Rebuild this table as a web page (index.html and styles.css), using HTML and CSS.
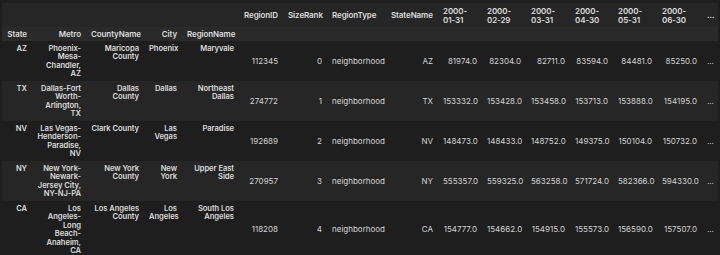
FILE: index.html
```html
<!DOCTYPE html>
<html lang="en">
<head>
    <meta charset="UTF-8">
    <meta name="viewport" content="width=device-width, initial-scale=1.0">
    <title>DataFrame preview</title>
    <link rel="stylesheet" href="styles.css">
</head>
<body>

<div class="output">
    <table class="dataframe">
        <colgroup>
            <col class="w-state">
            <col class="w-metro">
            <col class="w-county">
            <col class="w-city">
            <col class="w-region">
            <col class="w-id">
            <col class="w-rank">
            <col class="w-type">
            <col class="w-statename">
            <col class="w-date">
            <col class="w-date">
            <col class="w-date">
            <col class="w-date-narrow">
            <col class="w-date">
            <col class="w-date-wide">
            <col class="w-more">
        </colgroup>
        <thead>
            <tr class="col-names">
                <th></th>
                <th></th>
                <th></th>
                <th></th>
                <th></th>
                <th>RegionID</th>
                <th>SizeRank</th>
                <th>RegionType</th>
                <th>StateName</th>
                <th>2000-01-31</th>
                <th>2000-02-29</th>
                <th>2000-03-31</th>
                <th>2000-04-30</th>
                <th>2000-05-31</th>
                <th>2000-06-30</th>
                <th>...</th>
            </tr>
            <tr class="index-names">
                <th>State</th>
                <th>Metro</th>
                <th>CountyName</th>
                <th>City</th>
                <th>RegionName</th>
                <th></th>
                <th></th>
                <th></th>
                <th></th>
                <th></th>
                <th></th>
                <th></th>
                <th></th>
                <th></th>
                <th></th>
                <th></th>
            </tr>
        </thead>
        <tbody>
            <tr>
                <th>AZ</th>
                <th>Phoenix-Mesa-Chandler, AZ</th>
                <th>Maricopa County</th>
                <th>Phoenix</th>
                <th>Maryvale</th>
                <td>112345</td>
                <td>0</td>
                <td>neighborhood</td>
                <td>AZ</td>
                <td>81974.0</td>
                <td>82304.0</td>
                <td>82711.0</td>
                <td>83594.0</td>
                <td>84481.0</td>
                <td>85250.0</td>
                <td>...</td>
            </tr>
            <tr>
                <th>TX</th>
                <th>Dallas-Fort Worth-Arlington, TX</th>
                <th>Dallas County</th>
                <th>Dallas</th>
                <th>Northeast Dallas</th>
                <td>274772</td>
                <td>1</td>
                <td>neighborhood</td>
                <td>TX</td>
                <td>153332.0</td>
                <td>153428.0</td>
                <td>153458.0</td>
                <td>153713.0</td>
                <td>153888.0</td>
                <td>154195.0</td>
                <td>...</td>
            </tr>
            <tr>
                <th>NV</th>
                <th>Las Vegas-Henderson-Paradise, NV</th>
                <th>Clark County</th>
                <th>Las Vegas</th>
                <th>Paradise</th>
                <td>192689</td>
                <td>2</td>
                <td>neighborhood</td>
                <td>NV</td>
                <td>148473.0</td>
                <td>148433.0</td>
                <td>148752.0</td>
                <td>149375.0</td>
                <td>150104.0</td>
                <td>150732.0</td>
                <td>...</td>
            </tr>
            <tr>
                <th>NY</th>
                <th>New York-Newark-Jersey City, NY-NJ-PA</th>
                <th>New York County</th>
                <th>New York</th>
                <th>Upper East Side</th>
                <td>270957</td>
                <td>3</td>
                <td>neighborhood</td>
                <td>NY</td>
                <td>555357.0</td>
                <td>559325.0</td>
                <td>563258.0</td>
                <td>571724.0</td>
                <td>582366.0</td>
                <td>594330.0</td>
                <td>...</td>
            </tr>
            <tr>
                <th>CA</th>
                <th>Los Angeles-Long Beach-Anaheim, CA</th>
                <th>Los Angeles County</th>
                <th>Los Angeles</th>
                <th>South Los Angeles</th>
                <td>118208</td>
                <td>4</td>
                <td>neighborhood</td>
                <td>CA</td>
                <td>154777.0</td>
                <td>154662.0</td>
                <td>154915.0</td>
                <td>155573.0</td>
                <td>156590.0</td>
                <td>157507.0</td>
                <td>...</td>
            </tr>
        </tbody>
    </table>
</div>

</body>
</html>
```

FILE: styles.css
```css
body {
    margin: 0;
    background-color: #1e1e1e;
    color: #d4d4d4;
    font-family: Inter, "Liberation Sans", sans-serif;
    font-size: 8px;
    line-height: 8.5px;
}
.output {
    padding: 3px 0 0 2px;
    overflow: hidden;
    height: 252px;
}
.dataframe {
    border-collapse: collapse;
    border-spacing: 0;
    table-layout: fixed;
    width: 716px;
}
.dataframe th,
.dataframe td {
    padding: 3px 5px 2px;
    text-align: right;
}
.dataframe th {
    font-weight: 600;
    color: #dcdcdc;
    letter-spacing: -0.1px;
}
.dataframe td {
    vertical-align: middle;
}
.dataframe tbody th {
    vertical-align: top;
    padding-top: 4px;
    font-size: 7.6px;
    letter-spacing: -0.05px;
}
.col-names th {
    text-align: left;
    vertical-align: middle;
    padding-top: 4px;
    padding-bottom: 3px;
    background-color: #262626;
}
.index-names th {
    padding-top: 3px;
    padding-bottom: 2px;
    background-color: #2a2a2a;
}
.dataframe tbody tr:nth-child(even) {
    background-color: #262626;
}
.w-state { width: 30px; }
.w-metro { width: 54px; }
.w-county { width: 58px; }
.w-city { width: 38px; }
.w-region { width: 57px; }
.w-id { width: 44px; }
.w-rank { width: 44px; }
.w-type { width: 59px; }
.w-statename { width: 52px; }
.w-date { width: 44px; }
.w-date-narrow { width: 43px; }
.w-date-wide { width: 45px; }
.w-more { width: 16px; }
```
